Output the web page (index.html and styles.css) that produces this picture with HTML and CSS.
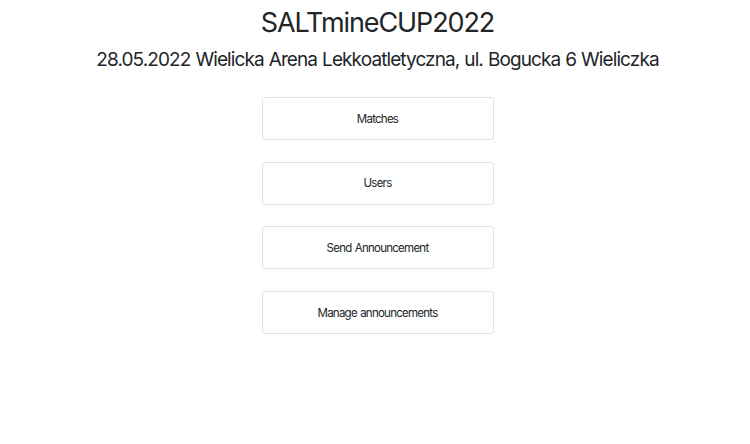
FILE: index.html
```html
<!DOCTYPE html>
<html lang="pl">
<head>
<meta charset="utf-8">
<title>SALTmineCUP2022</title>
<link rel="stylesheet" href="styles.css">
</head>
<body>
<div class="page">
  <h1 class="title">SALTmineCUP2022</h1>
  <h3 class="subtitle">28.05.2022 Wielicka Arena Lekkoatletyczna, ul. Bogucka 6 Wieliczka</h3>
  <nav class="menu">
    <a class="menu-item" href="#">Matches</a>
    <a class="menu-item" href="#">Users</a>
    <a class="menu-item" href="#">Send Announcement</a>
    <a class="menu-item" href="#">Manage announcements</a>
  </nav>
</div>
</body>
</html>
```
FILE: styles.css
```css
html, body {
  margin: 0;
  padding: 0;
  background: #fff;
}
body {
  font-family: Inter, "Noto Sans", "Liberation Sans", sans-serif;
  color: #212529;
}
.page {
  display: flex;
  flex-direction: column;
  align-items: center;
  padding-top: 5px;
  padding-left: 5px;
}
.title {
  margin: 0;
  font-size: 27px;
  font-weight: 400;
  line-height: 36px;
  letter-spacing: -1.1px;
}
.subtitle {
  margin: 6px 0 0;
  font-size: 19px;
  font-weight: 400;
  line-height: 26px;
  letter-spacing: -0.9px;
  word-spacing: 0.5px;
}
.menu {
  display: flex;
  flex-direction: column;
  gap: 21.7px;
  margin-top: 24px;
}
.menu-item {
  box-sizing: border-box;
  width: 232px;
  height: 43px;
  display: flex;
  align-items: center;
  justify-content: center;
  border: 1px solid #dfe2e5;
  border-radius: 3px;
  color: #212529;
  text-decoration: none;
  font-size: 11.5px;
  letter-spacing: -0.75px;
  word-spacing: 0.8px;
}
```
